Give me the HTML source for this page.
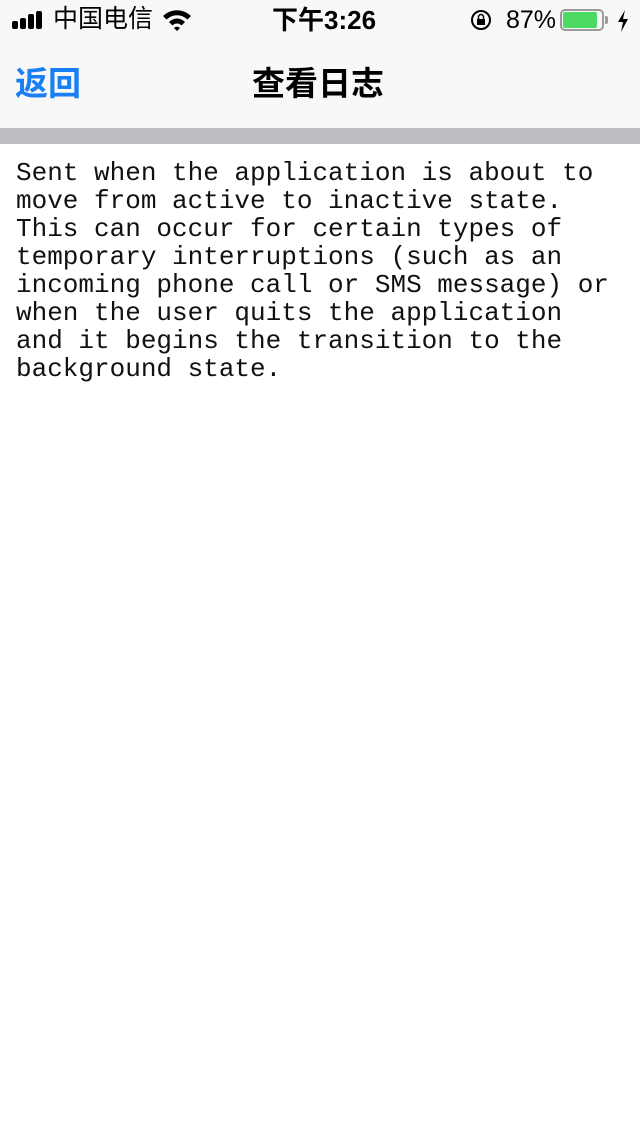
<!DOCTYPE html>
<html><head><meta charset="utf-8"><style>
body{margin:0;width:640px;height:1136px;background:#fff;position:relative;overflow:hidden;font-family:"Liberation Sans","Noto Sans CJK SC",sans-serif}
.top{position:absolute;left:0;top:0;width:640px;height:128px;background:#f8f8f8}
.bar{position:absolute;left:0;top:128px;width:640px;height:16px;background:#bdbcc1}
.a{position:absolute;white-space:nowrap;line-height:1}
pre{position:absolute;left:16px;top:159px;margin:0;font-family:"Liberation Mono",monospace;font-size:26px;line-height:28px;color:#111;letter-spacing:0}
</style></head><body>
<div class="top"></div>
<div class="bar"></div>
<svg class="a" style="left:12px;top:11px" width="36" height="18"><rect x="0" y="10" width="6" height="8" rx="2"/><rect x="8" y="7" width="6" height="11" rx="2"/><rect x="16" y="3" width="6" height="15" rx="2"/><rect x="24" y="0" width="6" height="18" rx="2"/></svg>
<div class="a" style="left:53px;top:7px;font-size:25px">中国电信</div>
<svg class="a" style="left:162px;top:9px" width="30" height="22" viewBox="0 0 30 22"><path d="M1 7 A20 20 0 0 1 29 7 L25.5 10.5 A15 15 0 0 0 4.5 10.5Z M7 13 A11 11 0 0 1 23 13 L19.5 16.5 A6 6 0 0 0 10.5 16.5Z M12 19 L15 22 L18 19 A4 4 0 0 0 12 19Z"/></svg>
<div class="a" style="left:272px;top:7px;font-size:26px;font-weight:bold">下午3:26</div>
<svg class="a" style="left:470px;top:9px" width="24" height="24" viewBox="0 0 24 24"><circle cx="11" cy="11" r="9" fill="none" stroke="#000" stroke-width="2"/><rect x="7" y="10" width="8" height="6"/><path d="M8.5 10V8a2.5 2.5 0 0 1 5 0v2" fill="none" stroke="#000" stroke-width="1.5"/></svg>
<div class="a" style="left:506px;top:8px;font-size:25px">87%</div>
<div class="a" style="left:560px;top:9px;width:44px;height:22px;border:2px solid #9a9a9a;border-radius:5px;box-sizing:border-box"></div>
<div class="a" style="left:563px;top:12px;width:34px;height:16px;background:#4cd964;border-radius:2px"></div>
<div class="a" style="left:605px;top:16px;width:3px;height:8px;background:#9a9a9a;border-radius:0 2px 2px 0"></div>
<svg class="a" style="left:617px;top:10px" width="12" height="22" viewBox="0 0 12 22"><path d="M8 0 L1 12 H6 L4 22 L11 9 H6Z"/></svg>
<div class="a" style="left:15px;top:67px;font-size:33px;color:#1a7ef5;font-weight:bold">返回</div>
<div class="a" style="left:252px;top:67px;font-size:33px;color:#000;font-weight:bold">查看日志</div>
<pre>Sent when the application is about to
move from active to inactive state.
This can occur for certain types of
temporary interruptions (such as an
incoming phone call or SMS message) or
when the user quits the application
and it begins the transition to the
background state.</pre>
</body></html>
